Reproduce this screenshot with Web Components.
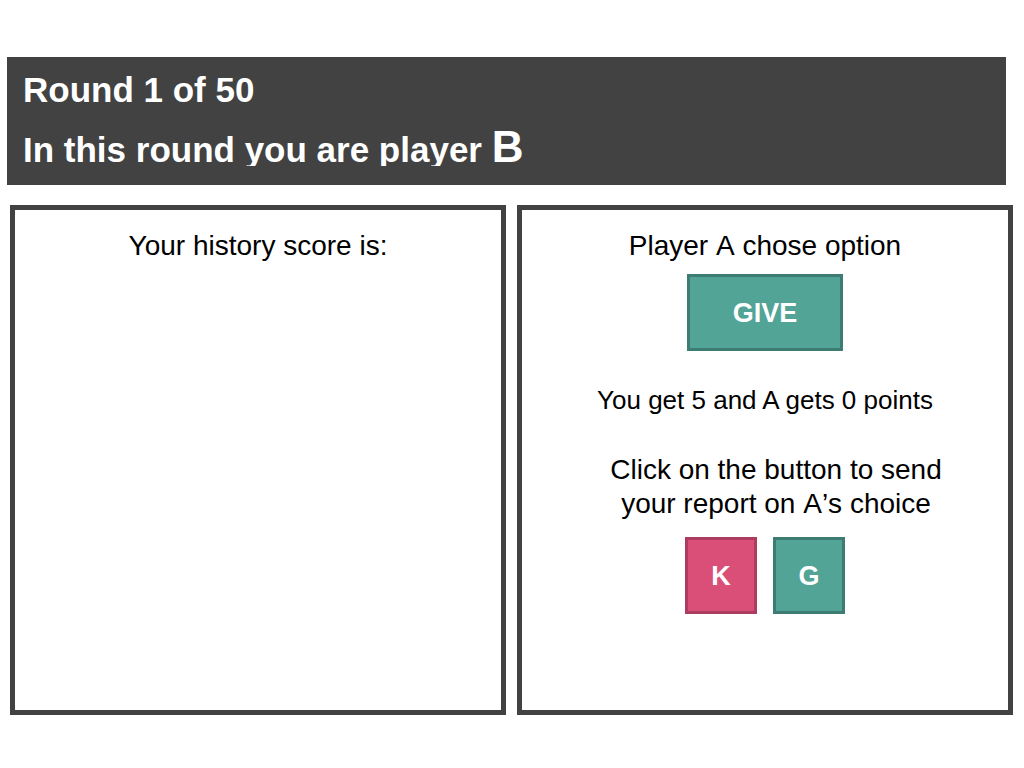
<!DOCTYPE html>
<html lang="en">
<head>
<meta charset="utf-8">
<title>Round 1 of 50</title>
<style>
  body { margin: 0; background: #fff; color: #000; font-family: "Liberation Sans", Arial, Helvetica, sans-serif; }
</style>
</head>
<body>
<game-screen></game-screen>

<template id="screen-template">
  <style>
    :host { display: flex; flex-direction: column; gap: 20px; box-sizing: border-box; min-height: 100vh; padding: 57px 11px 53px 10px; }
    round-header { margin: 0 7px 0 -3px; }
    main { flex: 1; display: grid; grid-template-columns: 1fr 1fr; gap: 11px; }
    h2, p { margin: 0; font-weight: 400; font-size: 28px; line-height: 34px; text-align: center; font-kerning: none; }
    h2.kerned { font-kerning: normal; }
    .payoff { margin-top: 32px; font-size: 26px; font-kerning: normal; }
    .prompt { margin-top: 36px; padding-left: 22px; }
    .choice { margin-top: 11px; }
    .answers { display: flex; gap: 16px; margin-top: 16px; }
  </style>
  <round-header>
    <span slot="round">Round 1 of 50</span>
    <span slot="intro">In this round you are player</span>
    <span slot="role">B</span>
  </round-header>
  <main>
    <game-panel><h2 class="kerned">Your history score is:</h2></game-panel>
    <game-panel>
      <h2>Player A chose option</h2>
      <choice-button class="choice" wide>GIVE</choice-button>
      <p class="payoff">You get 5 and A gets 0 points</p>
      <p class="prompt">Click on the button to send<br>your report on A’s choice</p>
      <div class="answers">
        <choice-button tone="pink">K</choice-button>
        <choice-button>G</choice-button>
      </div>
    </game-panel>
  </main>
</template>

<template id="header-template">
  <style>
    :host { display: block; padding: 12px 16px 19px; background: #424242; color: #fff; }
    h1, p { margin: 0; font-size: 35px; font-weight: 700; line-height: 42px; }
    /* The second line is cut just below its baseline. */
    p { height: 55px; line-height: 77px; overflow: hidden; }
    .role { font-size: 44px; line-height: 42px; }
  </style>
  <h1><slot name="round"></slot></h1>
  <p><slot name="intro"></slot> <span class="role"><slot name="role"></slot></span></p>
</template>

<template id="panel-template">
  <style>
    :host { display: block; box-sizing: border-box; border: 5px solid #424242; padding: 19px 0; }
    section { display: flex; flex-direction: column; align-items: center; }
  </style>
  <section><slot></slot></section>
</template>

<template id="button-template">
  <style>
    :host { display: block; --fill: #52a497; --edge: #3d7c73; }
    :host([tone="pink"]) { --fill: #da4f78; --edge: #ad3c60; }
    button { display: block; box-sizing: border-box; min-width: 72px; height: 77px; margin: 0; padding: 0; border: 3px solid var(--edge); border-radius: 0; background: var(--fill); color: #fff; font: 700 27px/32px "Liberation Sans", Arial, sans-serif; cursor: pointer; }
    :host([wide]) button { min-width: 156px; }
  </style>
  <button type="button"><slot></slot></button>
</template>

<script>
  function define(name, templateId) {
    customElements.define(name, class extends HTMLElement {
      constructor() {
        super();
        this.attachShadow({ mode: "open" }).append(
          document.getElementById(templateId).content.cloneNode(true));
      }
    });
  }
  define("choice-button", "button-template");
  define("game-panel", "panel-template");
  define("round-header", "header-template");
  define("game-screen", "screen-template");
</script>
</body>
</html>
